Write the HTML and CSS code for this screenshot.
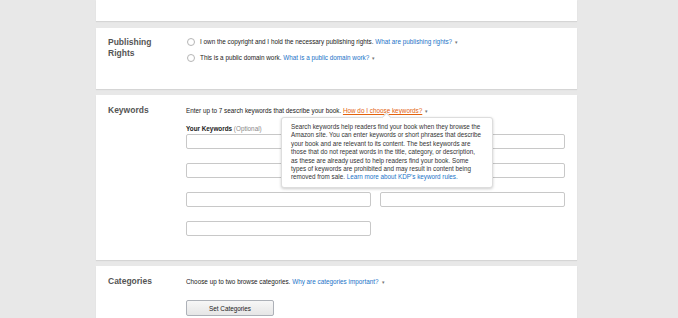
FILE: index.html
```html
<!DOCTYPE html>
<html lang="en">
<head>
    <meta charset="UTF-8">
    <title>Book Details</title>
    <link rel="stylesheet" href="styles.css">
</head>
<body>
    <div class="page">
        <div class="card card-top"></div>

        <div class="card card-rights">
            <div class="card-label">Publishing<br>Rights</div>
            <div class="card-body">
                <div class="radio-row">
                    <span class="radio"></span>
                    <span>I own the copyright and I hold the necessary publishing rights. <a class="link">What are publishing rights?</a><span class="caret">&#9662;</span></span>
                </div>
                <div class="radio-row">
                    <span class="radio"></span>
                    <span>This is a public domain work. <a class="link">What is a public domain work?</a><span class="caret">&#9662;</span></span>
                </div>
            </div>
        </div>

        <div class="card card-keywords">
            <div class="card-label">Keywords</div>
            <div class="card-body">
                <p class="intro">Enter up to 7 search keywords that describe your book. <a class="link link-orange">How do I choose keywords?</a><span class="caret">&#9662;</span></p>
                <div class="field-title">Your Keywords <span class="optional">(Optional)</span></div>
                <div class="keyword-grid">
                    <input type="text">
                    <input type="text">
                    <input type="text">
                    <input type="text">
                    <input type="text">
                    <input type="text">
                    <input type="text">
                </div>
            </div>
            <div class="tooltip">
                Search keywords help readers find your book when they browse the<br>
                Amazon site. You can enter keywords or short phrases that describe<br>
                your book and are relevant to its content. The best keywords are<br>
                those that do not repeat words in the title, category, or description,<br>
                as these are already used to help readers find your book. Some<br>
                types of keywords are prohibited and may result in content being<br>
                removed from sale. <a class="link">Learn more about KDP's keyword rules.</a>
            </div>
        </div>

        <div class="card card-categories">
            <div class="card-label">Categories</div>
            <div class="card-body">
                <p class="intro">Choose up to two browse categories. <a class="link">Why are categories important?</a><span class="caret">&#9662;</span></p>
                <button type="button" class="btn">Set Categories</button>
            </div>
        </div>
    </div>
</body>
</html>
```

FILE: styles.css
```css
body {
    margin: 0;
    background: #e8e8e8;
    font-family: "Liberation Sans", Arial, sans-serif;
    color: #222;
    font-size: 6.35px;
    overflow: hidden;
}
.page {
    width: 481px;
    margin-left: 96px;
    display: flex;
    flex-direction: column;
    gap: 6px;
}
.card {
    background: #fff;
    display: flex;
    position: relative;
    padding: 10px 12px 0 12px;
    box-shadow: 0 1px 1px rgba(0, 0, 0, 0.08);
}
.card-top {
    height: 21px;
    padding: 0;
    margin-bottom: 1px;
}
.card-label {
    width: 78px;
    flex: none;
    font-size: 8.5px;
    font-weight: bold;
    color: #555;
    line-height: 11px;
}
.card-body {
    flex: 1;
}
.card-rights {
    height: 52px;
    padding-top: 9px;
}
.radio-row {
    display: flex;
    align-items: center;
    height: 9px;
    margin-bottom: 7px;
    gap: 4px;
}
.radio {
    width: 6px;
    height: 6px;
    border: 1px solid #b5b5b5;
    border-radius: 50%;
    margin-left: 1px;
    margin-right: 1px;
}
.link {
    color: #1a73c8;
}
.link-orange {
    color: #e3620e;
    text-decoration: underline;
}
.caret {
    color: #777;
    font-size: 5px;
    margin-left: 3px;
}
.intro {
    margin: 0;
    line-height: 11px;
}
.field-title {
    font-weight: bold;
    margin-top: 7px;
    line-height: 9px;
    margin-bottom: 1px;
}
.optional {
    font-weight: normal;
    color: #888;
}
.keyword-grid {
    display: grid;
    grid-template-columns: 185px 185px;
    column-gap: 9px;
    row-gap: 14px;
    padding-bottom: 24px;
}
.keyword-grid input {
    height: 15px;
    box-sizing: border-box;
    border: 1px solid #c8c8c8;
    border-radius: 2px;
    margin: 0;
    padding: 0;
}
.tooltip {
    position: absolute;
    left: 185px;
    top: 22px;
    width: 212px;
    box-sizing: border-box;
    padding: 5px 6px 5px 9px;
    background: #fff;
    border: 1px solid #ddd;
    border-radius: 3px;
    box-shadow: 0 1px 3px rgba(0, 0, 0, 0.2);
    font-size: 6.3px;
    line-height: 8.4px;
    color: #333;
    white-space: nowrap;
}
.tooltip::before {
    content: "";
    position: absolute;
    top: -4px;
    left: 101px;
    width: 6px;
    height: 6px;
    background: #fff;
    border-left: 1px solid #ddd;
    border-top: 1px solid #ddd;
    transform: rotate(45deg);
}
.card-categories {
    padding-top: 10px;
}
.btn {
    margin-top: 12px;
    width: 88px;
    height: 16px;
    font-family: "Liberation Sans", Arial, sans-serif;
    font-size: 6.35px;
    color: #222;
    background: linear-gradient(#f7f7f7, #e6e6e6);
    border: 1px solid #adb1b8;
    border-radius: 2px;
    padding: 0;
    margin-bottom: 20px;
}
```
